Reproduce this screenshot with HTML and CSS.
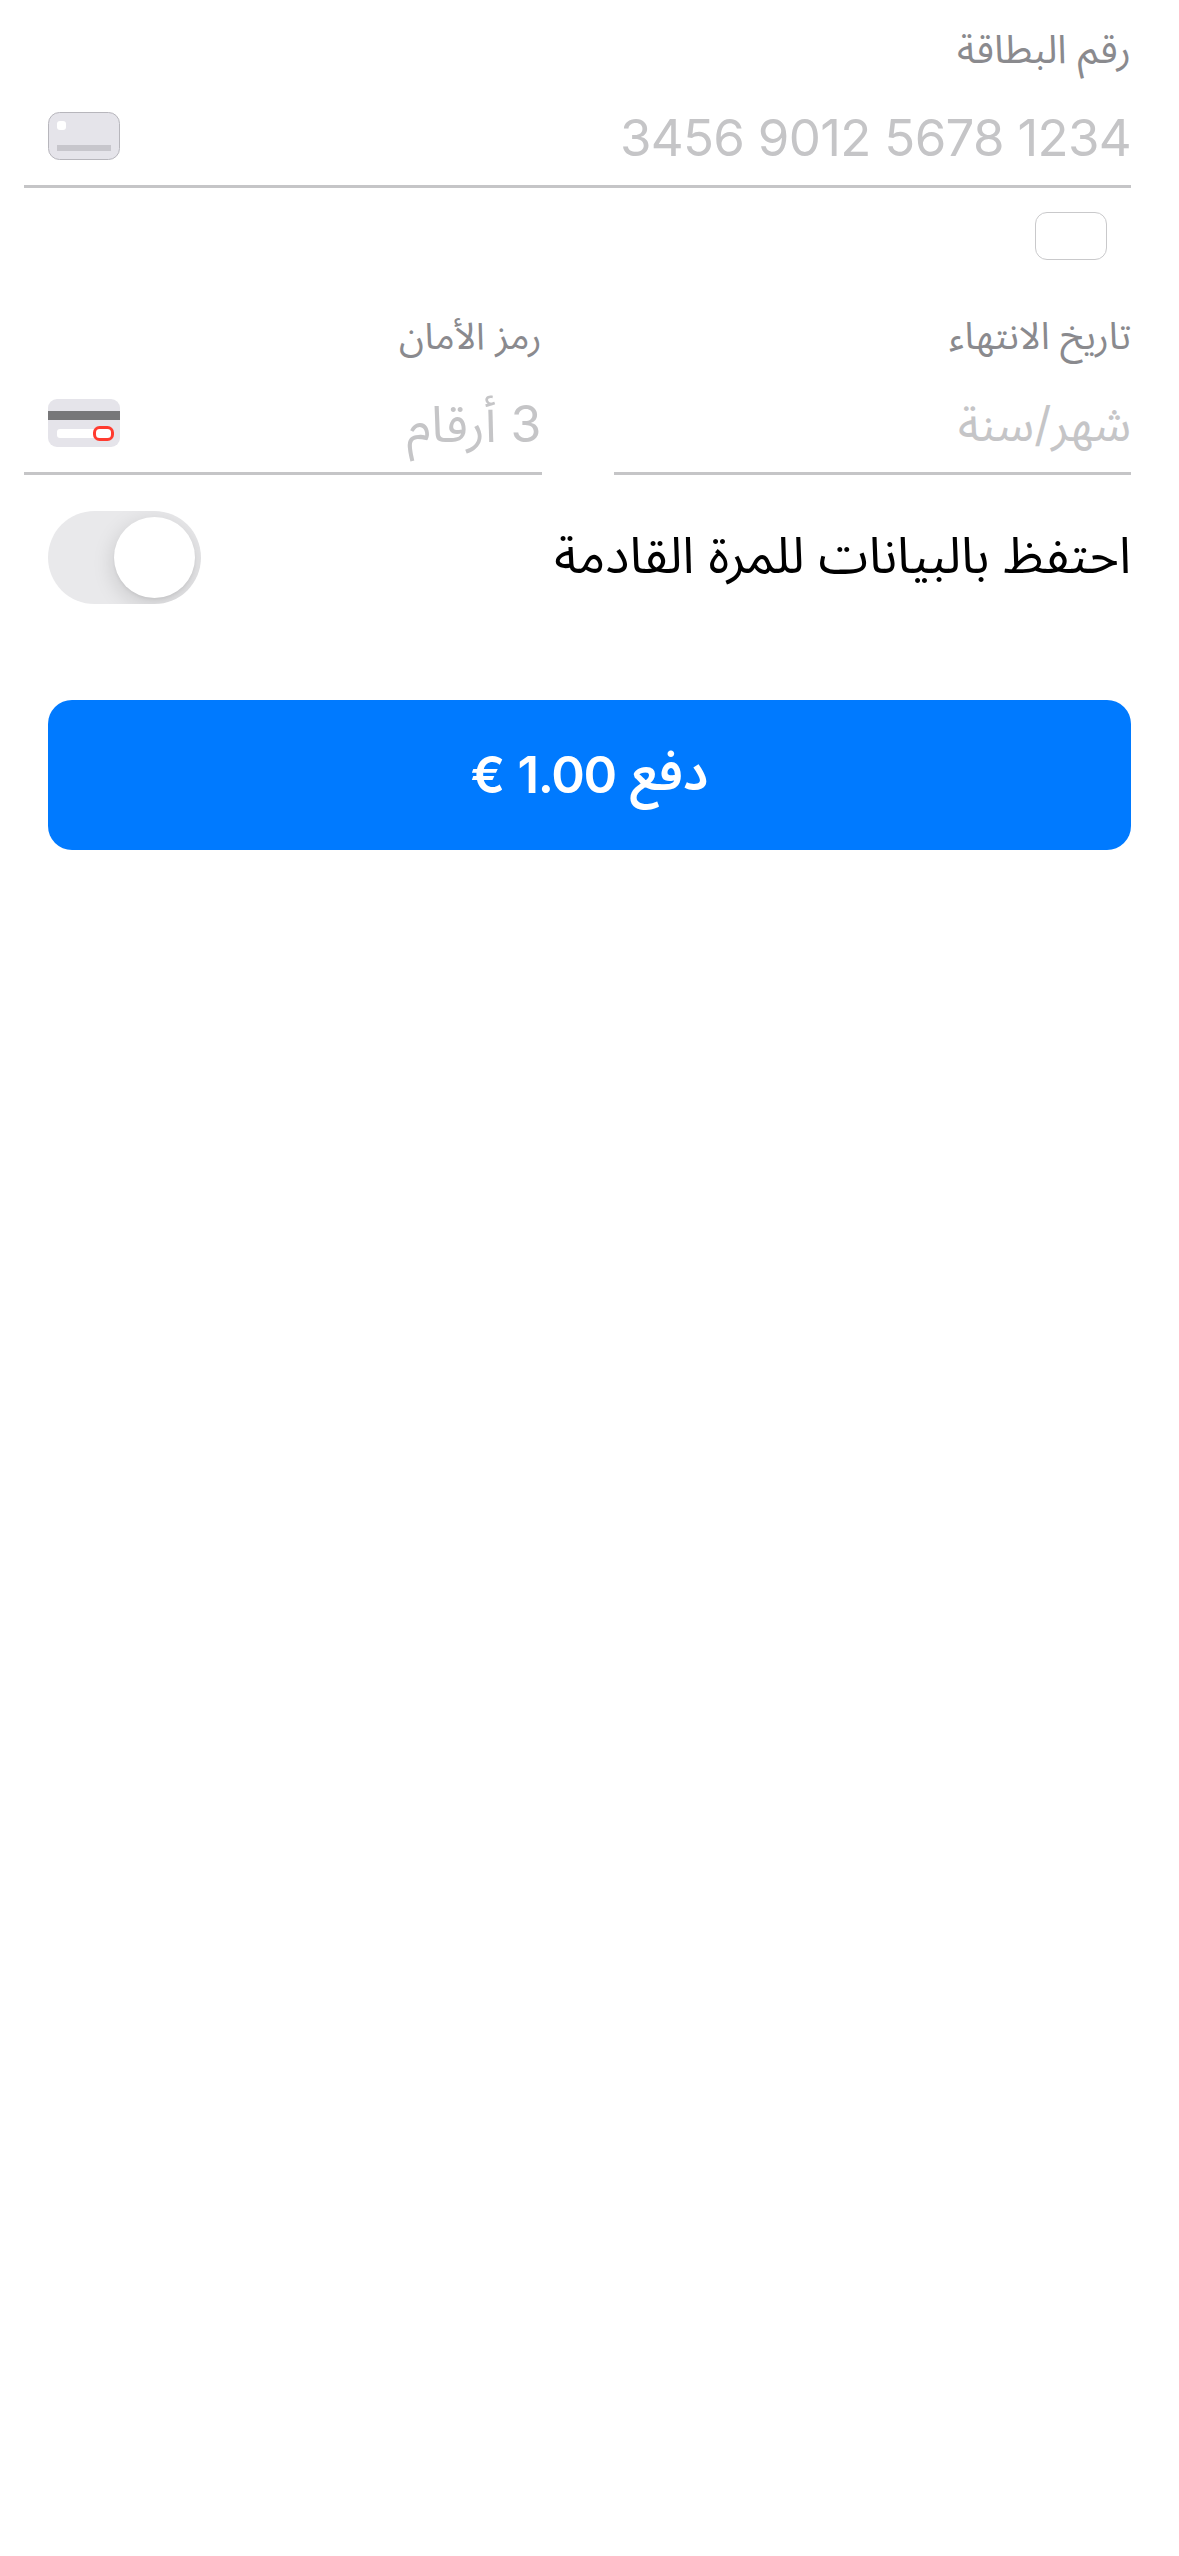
FILE: index.html
```html
<!DOCTYPE html>
<html lang="ar" dir="rtl">
<head><meta charset="utf-8"><title>الدفع بالبطاقة</title><link rel="stylesheet" href="styles.css"></head>
<body>
<main class="form">
  <section class="field number">
    <div class="label label-number"><span>رقم البطاقة</span></div>
    <div class="entry"><span class="digits" dir="ltr">3456 9012 5678 1234</span>
      <svg class="card" viewBox="0 0 72 48"><rect x=".5" y=".5" width="71" height="47" rx="11" fill="#e5e4ea" stroke="#b7b6bc"/><rect x="9" y="9" width="9" height="9" rx="3" fill="#fff"/><rect x="9" y="33" width="54" height="6" fill="#c7c6cc"/></svg>
    </div>
  </section>
  <div class="brands"><span class="brand"></span></div>
  <div class="pair">
    <section class="field"><div class="label label-expiry"><span>تاريخ الانتهاء</span></div><div class="entry"><span class="hint expiry">شهر/سنة</span></div></section>
    <section class="field"><div class="label"><span>رمز الأمان</span></div><div class="entry"><span class="hint">3 أرقام</span>
      <svg class="card" viewBox="0 0 72 48"><rect width="72" height="48" rx="9" fill="#e5e4ea"/><rect y="12" width="72" height="9" fill="#777779"/><rect x="9" y="30" width="45" height="9" rx="3" fill="#fff"/><rect x="46.500" y="28.500" width="18" height="12" rx="5" fill="#fff" stroke="#ff3b30" stroke-width="3"/></svg>
    </div></section>
  </div>
  <div class="save"><span class="save-text">احتفظ بالبيانات للمرة القادمة</span><span class="switch"><span class="knob"></span></span></div>
  <button class="pay"><span class="pay-word">دفع</span> <span class="amount">1.00 €</span></button>
</main>
</body></html>
```
FILE: styles.css
```css
* { box-sizing: border-box; }
body { margin: 0; background: #fff; font-family: Inter, "Noto Sans Arabic", "DejaVu Sans", sans-serif; }
.form { padding: 23px 48px 0; }
.field { height: 165px; border-bottom: 3px solid #c5c5c7; }
.number { margin-left: -24px; }
.label { height: 52px; color: #8a8a8e; font-size: 37px; line-height: 51px; }
.label-number { font-size: 39.5px; line-height: 52px; }
.label-expiry { font-size: 37.7px; }
.entry { height: 110px; display: flex; justify-content: space-between; padding: 37px 0 0 24px; color: #c5c5c7; }
.card { width: 72px; height: 48px; flex: none; }
.digits, .hint { font-size: 50px; line-height: 50px; }
.digits { font-size: 51px; line-height: 52px; letter-spacing: -.7px; }
.expiry { font-size: 47.3px; }
.brands { height: 122px; padding: 24px; }
.brand { display: block; width: 72px; height: 48px; border: 1px solid #c9c9cb; border-radius: 12px; }
.pair { display: flex; gap: 72px; margin-left: -24px; }
.pair .field { flex: 1; }
.save { display: flex; justify-content: space-between; align-items: center; height: 93px; margin-top: 36px; }
.save-text { font-size: 50.5px; line-height: 88px; padding-bottom: 5px; color: #000; }
.switch { width: 153px; height: 93px; border-radius: 47px; background: #e9e9eb; padding: 6px; overflow: hidden; }
.knob { display: block; width: 81px; height: 81px; border-radius: 50%; background: #fff; box-shadow: 0 6px 22px rgba(0, 0, 0, .15), 0 2px 3px rgba(0, 0, 0, .05); }
.pay { display: flex; align-items: center; justify-content: center; gap: 14px; width: 100%; height: 150px; margin-top: 96px; padding: 0; border: 0; border-radius: 24px; background: #007aff; color: #fff; font: 600 51px Inter, "Noto Sans Arabic", "DejaVu Sans", sans-serif; }
.pay-word { font-size: 51px; line-height: 60px; padding-bottom: 6px; }
.amount { line-height: 60px; letter-spacing: -1.3px; word-spacing: 2px; }
```
